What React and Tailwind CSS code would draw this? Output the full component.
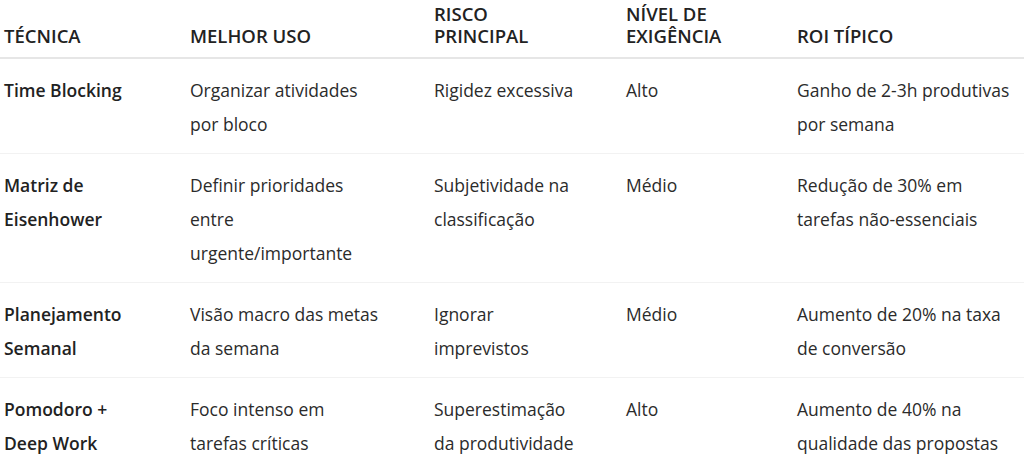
const rows = [
  {
    tecnica: "Time Blocking",
    uso: "Organizar atividades por bloco",
    risco: "Rigidez excessiva",
    nivel: "Alto",
    roi: "Ganho de 2-3h produtivas por semana",
  },
  {
    tecnica: "Matriz de Eisenhower",
    uso: "Definir prioridades entre urgente/importante",
    risco: "Subjetividade na classificação",
    nivel: "Médio",
    roi: "Redução de 30% em tarefas não-essenciais",
  },
  {
    tecnica: "Planejamento Semanal",
    uso: "Visão macro das metas da semana",
    risco: "Ignorar imprevistos",
    nivel: "Médio",
    roi: "Aumento de 20% na taxa de conversão",
  },
  {
    tecnica: "Pomodoro + Deep Work",
    uso: "Foco intenso em tarefas críticas",
    risco: "Superestimação da produtividade",
    nivel: "Alto",
    roi: "Aumento de 40% na qualidade das propostas",
  },
];

const headers = [
  ["TÉCNICA"],
  ["MELHOR USO"],
  ["RISCO", "PRINCIPAL"],
  ["NÍVEL DE", "EXIGÊNCIA"],
  ["ROI TÍPICO"],
];

const cell = "pl-[4px] pr-[40px] pt-[14px] pb-[12px] align-top text-[17.5px] leading-[34px]";

export default function App() {
  return (
    <div className="w-[1024px] h-[461px] overflow-hidden bg-white font-['Open_Sans',sans-serif] text-[#2b2b2b]">
      <table className="w-[1055px] table-fixed border-collapse">
        <colgroup>
          <col className="w-[186px]" />
          <col className="w-[244px]" />
          <col className="w-[192px]" />
          <col className="w-[171px]" />
          <col className="w-[262px]" />
        </colgroup>
        <thead>
          <tr className="border-b-2 border-[#e6e6e6]">
            {headers.map((h) => (
              <th
                key={h.join(" ")}
                className="pl-[4px] pr-[40px] pb-[10px] pt-[3px] text-left align-bottom text-[18.5px] font-semibold leading-[22px] text-[#222]"
              >
                {h.map((line, i) => (
                  <span key={line}>
                    {i > 0 && <br />}
                    {line}
                  </span>
                ))}
              </th>
            ))}
          </tr>
        </thead>
        <tbody>
          {rows.map((r, i) => (
            <tr key={r.tecnica} className={i < rows.length - 1 ? "border-b border-[#f2f2f2]" : ""}>
              <td className={`${cell} font-semibold text-[#222]`}>{r.tecnica}</td>
              <td className={`${cell} pr-[48px]`}>{r.uso}</td>
              <td className={cell}>{r.risco}</td>
              <td className={cell}>{r.nivel}</td>
              <td className={cell}>{r.roi}</td>
            </tr>
          ))}
        </tbody>
      </table>
    </div>
  );
}
